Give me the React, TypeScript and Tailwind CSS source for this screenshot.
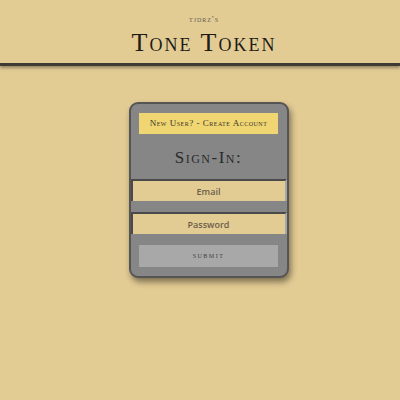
import React from "react";

export default function App() {
  return (
    <div className="min-h-[400px] w-full bg-[#e3cb94] font-['Liberation_Serif',serif]">
      <header className="flex flex-col items-center pl-[8px] pt-[14px] pb-[6px] border-b-[3px] border-[#3f3a33] shadow-[0_2px_3px_rgba(0,0,0,0.35)]">
        <span className="text-[9px] leading-[10px] text-[#5f5a50] tracking-[1px] [font-variant-caps:small-caps]">tjdrz's</span>
        <h1 className="mt-[5px] text-[26px] leading-[28px] text-[#1e1c19] tracking-[2px] [font-variant-caps:small-caps]">Tone Token</h1>
      </header>

      <main className="flex justify-center pl-[17px] pt-[36px]">
        <div className="w-[160px] rounded-[9px] border-2 border-[#555555] bg-[#868686] shadow-[2px_4px_6px_rgba(0,0,0,0.45)] pt-[9px] pb-[9px] flex flex-col items-center">
          <button className="w-[139px] h-[21px] bg-[#f0d573] text-[9px] text-[#3a3528] tracking-[0.5px] [font-variant-caps:small-caps]">
            New User? - Create Account
          </button>
          <h2 className="mt-[13px] text-[17px] leading-[22px] text-[#2a2a2a] tracking-[1.5px] [font-variant-caps:small-caps]">Sign-In:</h2>
          <form className="w-full flex flex-col items-center mt-[10px]" onSubmit={(e) => e.preventDefault()}>
            <input
              type="email"
              placeholder="Email"
              className="w-full h-[22px] bg-[#e3cb94] border-t-2 border-l-2 border-r-2 border-t-[#4a4a4a] border-l-[#4a4a4a] border-r-[#a6a6a6] text-center text-[9px] font-semibold font-['Open_Sans',sans-serif] placeholder:text-[#6b5f49] outline-none"
            />
            <input
              type="password"
              placeholder="Password"
              className="mt-[11px] w-full h-[22px] bg-[#e3cb94] border-t-2 border-l-2 border-r-2 border-t-[#4a4a4a] border-l-[#4a4a4a] border-r-[#a6a6a6] text-center text-[9px] font-semibold font-['Open_Sans',sans-serif] placeholder:text-[#6b5f49] outline-none"
            />
            <button type="submit" className="mt-[11px] w-[139px] h-[22px] bg-[#a8a8a8] text-[8px] text-[#404040] tracking-[1.5px] [font-variant-caps:small-caps]">
              submit
            </button>
          </form>
        </div>
      </main>
    </div>
  );
}
